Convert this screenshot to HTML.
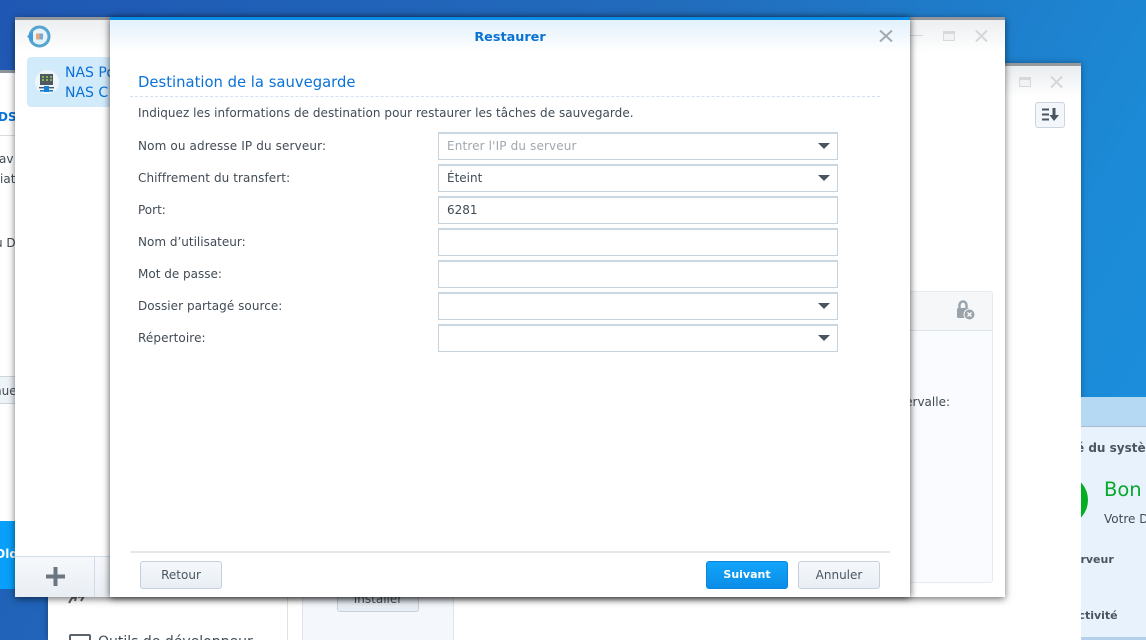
<!DOCTYPE html>
<html><head><meta charset="utf-8"><style>
*{box-sizing:border-box}
html,body{margin:0;padding:0;width:1146px;height:640px;overflow:hidden}
body{position:relative;font-family:"DejaVu Sans","Liberation Sans",sans-serif;font-size:12px;color:#414b55;background:linear-gradient(120deg,#1f58b4 0%,#226cbc 45%,#1c8ad6 80%,#1a90de 100%)}
.a{position:absolute;white-space:nowrap}
.win{position:absolute;background:#fff;overflow:hidden}
.lbl{position:absolute;left:138px;white-space:nowrap;line-height:16px;color:#414b55}
.fld{position:absolute;left:438px;width:400px;height:28px;border:1px solid #c8d2dc;border-top:2px solid #ccd6e0;background:#fff;padding-left:8px;line-height:24px;color:#414b55}
.arr{position:absolute;left:818px;width:0;height:0;border-left:6px solid transparent;border-right:6px solid transparent;border-top:6px solid #4a5560}
.btn{position:absolute;height:28px;width:82px;top:561px;border:1px solid #c6d0dc;border-radius:3px;background:linear-gradient(#f5f8fb,#e8eef4);text-align:center;line-height:26px;color:#4b5560}
</style></head><body>

<!-- back left window -->
<div class="win" style="left:0;top:70px;width:60px;height:451px;border-top:3px solid #8f959c;background:#fff">
<div class="a" style="left:0;top:62px;width:20px;height:1px;background:#d8dde2"></div>
<div class="a" style="left:-2px;top:37px;font-weight:bold;color:#0a72d8;font-size:12px">DS</div>
<div class="a" style="left:-1px;top:78px;line-height:16px">av</div>
<div class="a" style="left:0;top:98px;line-height:16px">iat</div>
<div class="a" style="left:-5px;top:162px;line-height:16px">u D</div>
<div class="a" style="left:-4px;top:303px;width:30px;height:28px;background:#eef3f8;border:1px solid #ccd6e0"></div>
<div class="a" style="left:-6px;top:310px;line-height:16px">nue</div>
</div>
<div class="a" style="left:0;top:521px;width:60px;height:68px;background:#08a0fa"></div>
<div class="a" style="left:-5px;top:547px;color:#fff;font-weight:bold">Old</div>

<!-- right main window -->
<div class="win" style="left:48px;top:63px;width:1033px;height:577px;border-top:3px solid #95999e;box-shadow:0 0 6px rgba(0,0,0,.35)">
<div class="a" style="left:0;top:0;width:1033px;height:32px;background:linear-gradient(#e9ecef,#fff)"></div>
</div>
<div class="a" style="left:287px;top:590px;width:1px;height:50px;background:#dde2e8"></div>
<div class="a" style="left:302px;top:590px;width:152px;height:50px;background:#f4f8fc;border:1px solid #dfe5ec;border-bottom:0"></div>
<div class="a" style="left:337px;top:585px;width:82px;height:27px;border:1px solid #c6d0dc;border-radius:3px;background:#e8eef4;text-align:center;line-height:26px;color:#4b5560">Installer</div>
<svg class="a" style="left:68px;top:596px" width="18" height="8"><path d="M1 7 L4 2 L8 1 L7 5 M10 1 L16 0 L13 5" fill="none" stroke="#555f68" stroke-width="2"/></svg>
<div class="a" style="left:69px;top:634px;width:22px;height:14px;border:2px solid #5a646e;border-radius:2px"></div>
<div class="a" style="left:98px;top:634px;font-size:14px;color:#414b55">Outils de développeur</div>
<div class="a" style="left:1019px;top:77px;width:12px;height:10px;border:1px solid #d6d9dc;border-top:3px solid #d6d9dc;background:#f0f2f4"></div>
<svg class="a" style="left:1050px;top:76px" width="13" height="12"><path d="M1 0.5 L12 11.5 M12 0.5 L1 11.5" stroke="#d4d7da" stroke-width="2"/></svg>
<div class="a" style="left:1035px;top:102px;width:30px;height:26px;border:1px solid #ccd5df;border-radius:3px;background:#f3f6fa"></div>
<svg class="a" style="left:1041px;top:108px" width="19" height="14"><path d="M1 1.5H8M1 6.5H8M1 11.5H8" stroke="#4a5560" stroke-width="2"/><path d="M11.5 0H14.5V7H18L13 13 8.5 7H11.5Z" fill="#4a5560"/></svg>

<!-- far right widget -->
<div class="a" style="left:1081px;top:397px;width:65px;height:30px;background:#b5d8f3;border-bottom:1px solid #a8bccc"></div>
<div class="a" style="left:1081px;top:427px;width:65px;height:210px;background:#e8f2fc;overflow:hidden">
<div class="a" style="left:-5px;top:13px;font-weight:bold;line-height:16px;color:#4a5560">é du système</div>
<div class="a" style="left:-33px;top:50px;width:40px;height:46px;border-radius:50%;background:#05ad22"></div>
<div class="a" style="left:23px;top:51px;font-size:19.5px;line-height:24px;color:#08a82c">Bon</div>
<div class="a" style="left:23px;top:84px;line-height:16px;color:#414b55">Votre DS</div>
<div class="a" style="left:-8px;top:126px;font-weight:bold;font-size:11px;line-height:14px;color:#4a5560">erveur</div>
<div class="a" style="left:-10px;top:182px;font-weight:bold;font-size:11px;line-height:14px;color:#4a5560">activité</div>
</div>
<div class="a" style="left:1081px;top:637px;width:65px;height:3px;background:#b5d0ea"></div>

<!-- backup app window -->
<div class="win" style="left:15px;top:17px;width:990px;height:580px;border-top:3px solid #92979d;box-shadow:0 2px 7px rgba(0,0,0,.55)">
<div class="a" style="left:0;top:0;width:990px;height:32px;background:linear-gradient(#eceef0,#fff)"></div>
<div class="a" style="left:12px;top:37px;width:90px;height:50px;background:#d2ebfb;border-radius:4px"></div>
<div class="a" style="left:20px;top:50px;width:24px;height:24px;border-radius:50%;background:#edf6fc"></div>
<div class="a" style="left:50px;top:43px;font-size:14px;line-height:20px;color:#0a70d8;white-space:normal;width:52px;overflow:hidden;height:40px">NAS Po<br>NAS C</div>
<div class="a" style="left:0;top:536px;width:95px;height:41px;background:linear-gradient(#f6f8fb,#e9eef4);border-top:1px solid #d0dcea"></div>
<div class="a" style="left:79px;top:536px;width:1px;height:41px;background:#d0dcea"></div>
</div>

<!-- inner panel -->
<div class="a" style="left:880px;top:291px;width:113px;height:292px;background:#fafbfe;border:1px solid #e6eaee;border-radius:3px"></div>
<div class="a" style="left:881px;top:292px;width:111px;height:39px;background:#f6f7f8;border-bottom:1px solid #dbe4ec"></div>
<svg class="a" style="left:956px;top:300px" width="20" height="21"><path d="M3.5 8V5a3.5 3.5 0 0 1 7 0V8" fill="none" stroke="#9aa2aa" stroke-width="2.4"/><rect x="1" y="8" width="12" height="10" rx="1.5" fill="#9aa2aa"/><circle cx="13.5" cy="14.5" r="5.5" fill="#9aa2aa" stroke="#f6f7f8" stroke-width="1"/><path d="M11.5 12.5L15.5 16.5M15.5 12.5L11.5 16.5" stroke="#fff" stroke-width="1.3"/></svg>
<div class="a" style="left:880px;top:394px;line-height:16px;width:70px;text-align:right">ervalle:</div>

<!-- app logo -->
<svg class="a" style="left:27px;top:25px" width="24" height="23"><circle cx="12.5" cy="11.5" r="9.5" fill="#e6f3fa" stroke="#56a5cf" stroke-width="3"/><path d="M0 11.5L6 6.5V16.5Z" fill="#3f9bd8"/><rect x="9" y="8.5" width="3.5" height="6" fill="#e8a67c"/><rect x="12.5" y="8.5" width="3.5" height="6" fill="#7ea9c8"/></svg>
<!-- NAS icon -->
<svg class="a" style="left:36px;top:73px" width="20" height="21"><rect x="4" y="1" width="13" height="11" fill="#4f5a60"/><path d="M6 4h2M10 4h2M14 4h2M6 7h2M10 7h2M14 7h2" stroke="#9ccb50" stroke-width="1.5"/><rect x="3" y="14" width="15" height="1.4" fill="#4f5a60"/><rect x="8" y="13" width="5" height="6" fill="#1580d6"/><rect x="4" y="17" width="13" height="1.6" fill="#1580d6"/></svg>
<svg class="a" style="left:45px;top:567px" width="21" height="20"><path d="M10.5 0V19M1 9.5H20" stroke="#6b7680" stroke-width="4"/></svg>
<div class="a" style="left:910px;top:35px;width:13px;height:1px;background:#d4d7da"></div>
<div class="a" style="left:943px;top:31px;width:12px;height:10px;border:1px solid #d6d9dc;border-top:3px solid #d6d9dc;background:#f0f2f4"></div>
<svg class="a" style="left:975px;top:30px" width="13" height="12"><path d="M1 0.5 L12 11.5 M12 0.5 L1 11.5" stroke="#d4d7da" stroke-width="2"/></svg>

<!-- Dialog -->
<div class="win" style="left:110px;top:17px;width:800px;height:580px;border-top:3px solid #0a8ce4;box-shadow:0 1px 7px rgba(0,0,0,.7);overflow:visible">
<div class="a" style="left:0;top:0;width:800px;height:32px;background:linear-gradient(#e2f1fb,#fff)"></div>
</div>
<div class="a" style="left:110px;top:29px;width:800px;text-align:center;font-weight:bold;font-size:12.8px;line-height:18px;color:#0a72d2">Restaurer</div>
<svg class="a" style="left:879px;top:30px" width="14" height="12"><path d="M1 0.5 L13 11.5 M13 0.5 L1 11.5" stroke="#a3a9af" stroke-width="2"/></svg>

<div class="a" style="left:138px;top:73px;font-size:14.8px;line-height:20px;color:#0a72d8">Destination de la sauvegarde</div>
<div class="a" style="left:130px;top:96px;width:750px;border-top:1px dashed #d4e0ec"></div>
<div class="lbl" style="top:105px;letter-spacing:.04px">Indiquez les informations de destination pour restaurer les tâches de sauvegarde.</div>

<div class="lbl" style="top:138px;letter-spacing:.13px">Nom ou adresse IP du serveur:</div>
<div class="lbl" style="top:170px;letter-spacing:.08px">Chiffrement du transfert:</div>
<div class="lbl" style="top:202px">Port:</div>
<div class="lbl" style="top:234px">Nom d’utilisateur:</div>
<div class="lbl" style="top:266px">Mot de passe:</div>
<div class="lbl" style="top:298px;letter-spacing:.05px">Dossier partagé source:</div>
<div class="lbl" style="top:330px;letter-spacing:.1px">Répertoire:</div>

<div class="fld" style="top:132px;color:#a0a8b0;letter-spacing:.14px">Entrer l'IP du serveur</div><div class="arr" style="top:143px"></div>
<div class="fld" style="top:164px">Éteint</div><div class="arr" style="top:175px"></div>
<div class="fld" style="top:196px">6281</div>
<div class="fld" style="top:228px"></div>
<div class="fld" style="top:260px"></div>
<div class="fld" style="top:292px"></div><div class="arr" style="top:303px"></div>
<div class="fld" style="top:324px"></div><div class="arr" style="top:335px"></div>

<div class="a" style="left:130px;top:551px;width:760px;height:2px;background:#e6e7e8"></div>
<div class="btn" style="left:140px">Retour</div>
<div class="btn" style="left:706px;background:linear-gradient(#12a5fb,#0a8de6);border-color:#0a86dc;color:#fff;font-weight:bold;font-size:11px">Suivant</div>
<div class="btn" style="left:798px">Annuler</div>
</body></html>
